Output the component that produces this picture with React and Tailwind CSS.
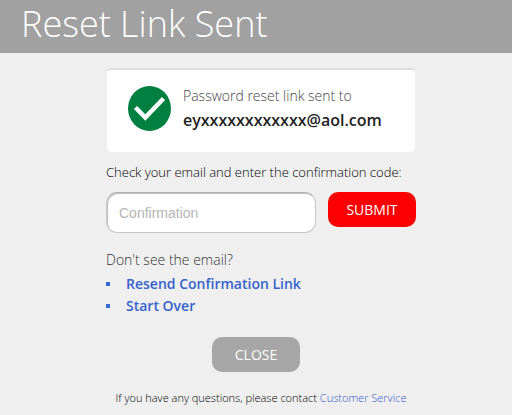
export default function App() {
    return (
        <div className="h-[415px] overflow-hidden bg-[#efefef] font-['Open_Sans',sans-serif] text-black">
            <header className="h-[53px] bg-[#a1a1a1] pl-[21px]">
                <h1 className="text-[36px] leading-[48px] font-light whitespace-nowrap text-white">Reset Link Sent</h1>
            </header>

            <main className="ml-[106px] w-[310px] pt-[15px]">
                {/* Status card */}
                <section className="flex h-[84px] rounded-[5px] border-t-2 border-r border-l border-[#dedede] border-r-[#efefef] border-l-[#efefef] bg-white pt-[16px] pl-[21px]">
                    <svg className="mr-[12px] h-[45px] w-[43px] shrink-0" viewBox="0 0 43 45" fill="none">
                        <ellipse cx="21.5" cy="22.5" rx="21.5" ry="22.5" fill="#008040" />
                        <path d="M7.5 21.5L17.3 31.5L35.5 12.5" stroke="#fff" strokeWidth="4.5" />
                    </svg>
                    <div className="-mt-0.5 whitespace-nowrap">
                        <p className="text-sm leading-[24px] font-light text-[#444]">Password reset link sent to</p>
                        <p className="text-base leading-[24px] font-semibold text-[#222]">eyxxxxxxxxxxxx@aol.com</p>
                    </div>
                </section>

                <p className="mt-[10px] text-[13px] leading-[20px] font-light whitespace-nowrap">
                    Check your email and enter the confirmation code:
                </p>

                <form className="mt-[10px] flex items-start gap-3" onSubmit={(e) => e.preventDefault()}>
                    <input
                        type="text"
                        placeholder="Confirmation"
                        className="h-[41px] w-[210px] rounded-[11px] border border-[#c8c8c8] border-t-[#b2b2b2] bg-white px-3 font-['Liberation_Sans',sans-serif] text-sm shadow-[inset_1px_1px_1px_#bbb] placeholder:text-[#b5b5b5] outline-none"
                    />
                    <button className="h-[35px] w-[88px] rounded-[10px] bg-[#fa0000] text-sm text-white">SUBMIT</button>
                </form>

                <section className="mt-[17px] text-sm whitespace-nowrap">
                    <p className="leading-[20px] font-light text-[#333]">Don't see the email?</p>
                    <ul className="mt-[3px] font-semibold text-[#3562cc]">
                        <li className="flex h-[22px] items-center gap-4">
                            <span className="h-1 w-1 bg-[#3468d4]" />
                            <a href="#">Resend Confirmation Link</a>
                        </li>
                        <li className="flex h-[22px] items-center gap-4">
                            <span className="h-1 w-1 bg-[#3468d4]" />
                            <a href="#">Start Over</a>
                        </li>
                    </ul>
                </section>

                <button className="mt-[20px] ml-[106px] block h-[35px] w-[88px] rounded-[10px] bg-[#a6a6a6] text-sm text-white">
                    CLOSE
                </button>

                <p className="mt-[18px] ml-[9.5px] text-[11px] leading-[16px] font-light whitespace-nowrap">
                    If you have any questions, please contact{" "}
                    <a href="#" className="text-[#3358cc]">Customer Service</a>
                </p>
            </main>
        </div>
    );
}
